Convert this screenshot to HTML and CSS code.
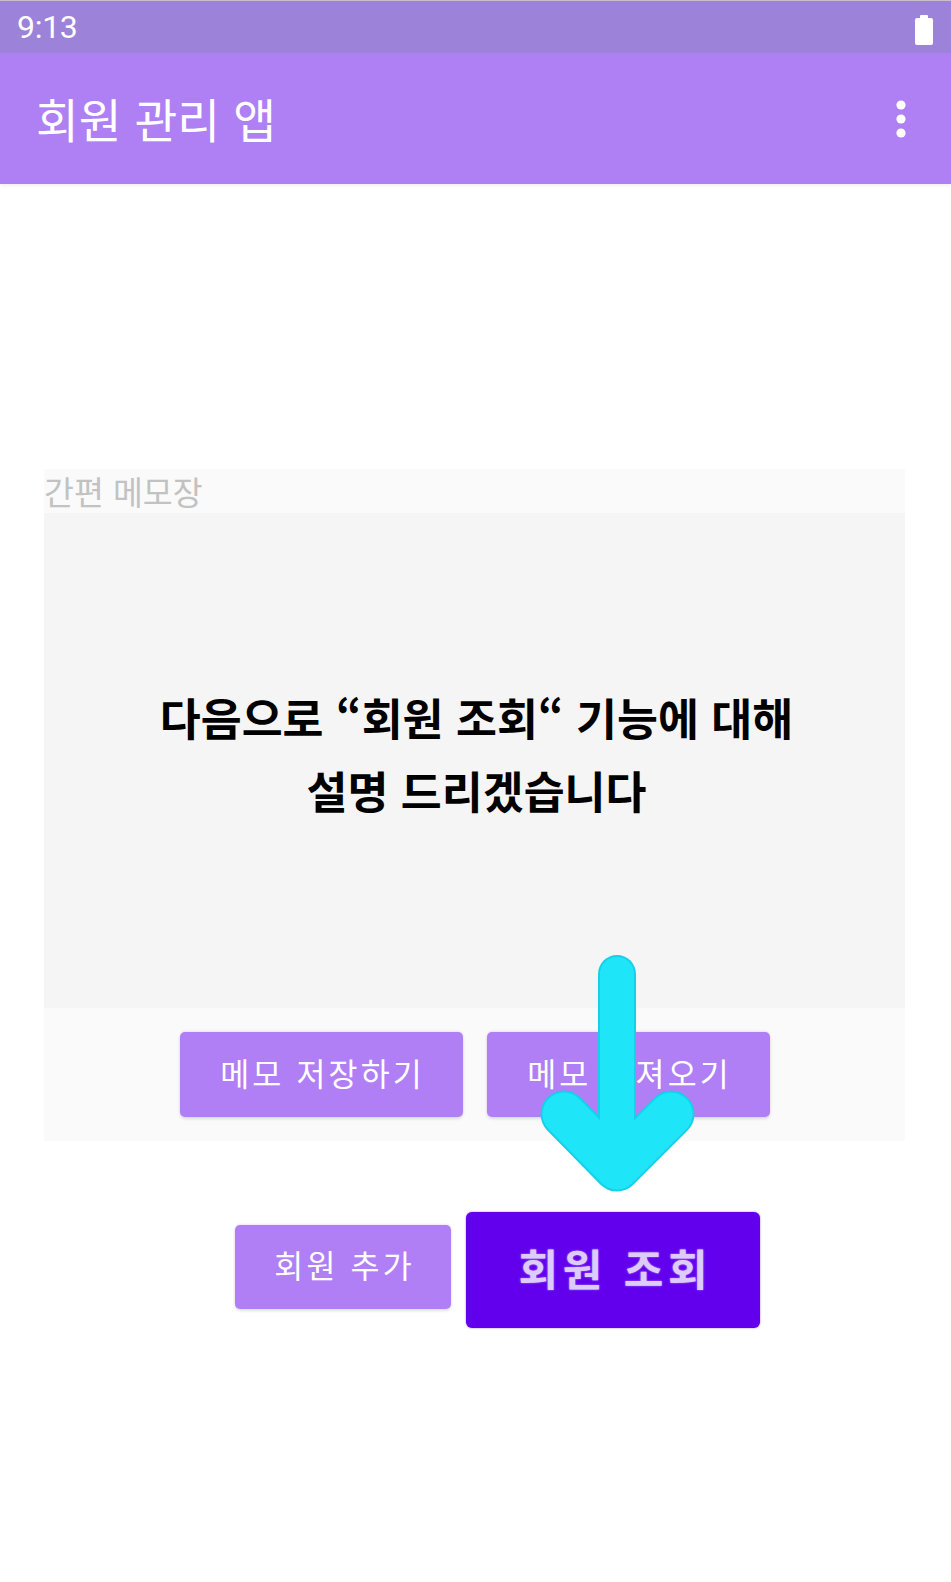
FILE: index.html
```html
<!DOCTYPE html>
<html lang="ko">
<head>
<meta charset="utf-8">
<title>회원 관리 앱</title>
<link rel="stylesheet" href="styles.css">
</head>
<body>
<div class="screen">
  <div class="status">
    <span class="time">9:13</span>
    <svg class="battery" width="18" height="31" viewBox="0 0 18 31">
      <rect x="5" y="0" width="8" height="4" rx="1" fill="#fff"/>
      <rect x="0" y="3" width="18" height="27" rx="2" fill="#fff"/>
    </svg>
  </div>
  <div class="appbar">
    <span class="title">회원 관리 앱</span>
    <svg class="menu" width="12" height="40" viewBox="0 0 12 40">
      <circle cx="6" cy="6" r="4.6" fill="#fff"/>
      <circle cx="6" cy="20" r="4.6" fill="#fff"/>
      <circle cx="6" cy="34" r="4.6" fill="#fff"/>
    </svg>
  </div>
  <main class="content">
    <section class="memo">
      <div class="memo-label">간편 메모장</div>
      <div class="memo-body">
        <p class="guide">다음으로 “회원 조회“ 기능에 대해<br>설명 드리겠습니다</p>
      </div>
      <div class="memo-actions">
        <button class="btn btn-w1">메모 저장하기</button>
        <button class="btn btn-w1">메모 가져오기</button>
      </div>
    </section>
    <div class="member-row">
      <button class="btn btn-add">회원 추가</button>
      <button class="btn btn-query">회원 조회</button>
    </div>
    <svg class="arrow" width="200" height="260" viewBox="0 0 200 260">
      <g fill="none" stroke-linecap="round" stroke-linejoin="round">
        <path d="M97 26 L97 218" stroke="#17cfe8" stroke-width="38"/>
        <path d="M44 166 L97 220 L151 166" stroke="#17cfe8" stroke-width="47"/>
        <path d="M97 26 L97 218" stroke="#1ee6f8" stroke-width="34"/>
        <path d="M44 166 L97 220 L151 166" stroke="#1ee6f8" stroke-width="43"/>
      </g>
    </svg>
  </main>
</div>
</body>
</html>
```

FILE: styles.css
```css
* { box-sizing: border-box; }
html, body { margin: 0; padding: 0; background: #fff; }
body {
  width: 951px;
  font-family: "Noto Sans CJK KR", "Noto Sans", sans-serif;
}
.screen { width: 951px; min-height: 1582px; position: relative; background: #fff; }

.status {
  height: 53px;
  background: #9c82d9;
  border-top: 1px solid #c4c0cc;
  display: flex;
  align-items: center;
  justify-content: space-between;
  padding: 0 18px 0 17px;
}
.time {
  font-family: Roboto, "Liberation Sans", sans-serif;
  color: #fff;
  font-size: 32px;
  line-height: 1;
  letter-spacing: -0.3px;
}
.battery { margin-top: 6px; }

.appbar {
  height: 131px;
  background: #af7ff4;
  display: flex;
  align-items: center;
  justify-content: space-between;
  padding: 0 44px 0 36px;
  box-shadow: 0 2px 3px rgba(0,0,0,0.06);
  position: relative;
  z-index: 1;
}
.title {
  color: #fff;
  font-size: 46.5px;
  font-weight: 400;
  line-height: 1;
}

.content { position: relative; padding-top: 285px; }

.memo { margin-left: 44px; width: 861px; }
.memo-label {
  height: 44px;
  background: #fafafa;
  color: #c2c2c2;
  font-size: 32.5px;
  line-height: 44px;
}
.memo-body {
  height: 495px;
  background: #f5f5f5;
  display: flex;
  align-items: center;
  justify-content: center;
}
.guide {
  margin: 0 0 15px;
  text-align: center;
  font-size: 44.5px;
  font-weight: 700;
  line-height: 73px;
  color: #000;
  padding-left: 4px;
}
.memo-actions {
  height: 133px;
  background: #fafafa;
  display: flex;
  justify-content: center;
  gap: 24px;
  padding-top: 24px;
}

.btn {
  border: 0;
  border-radius: 5px;
  background: #b07ff5;
  color: #fff;
  font-family: "Noto Sans CJK KR", "Noto Sans", sans-serif;
  font-size: 31.5px;
  letter-spacing: 0.1em;
  padding: 0 0 6px 0.1em;
  box-shadow: 0 2px 3px rgba(0,0,0,0.12), 0 -1px 2px rgba(150,100,230,0.15);
}
.btn-w1 { width: 283px; height: 85px; }

.member-row {
  display: flex;
  align-items: flex-start;
  gap: 15px;
  padding-left: 235px;
  padding-top: 71px;
}
.btn-add { width: 216px; height: 84px; margin-top: 13px; }
.btn-query {
  width: 294px;
  height: 116px;
  background: #6200ee;
  color: #dccbfb;
  font-size: 43px;
  font-weight: 700;
  letter-spacing: 0.11em;
  padding: 0 0 6px 0.11em;
  border-radius: 6px;
  text-shadow: 0 0 2px rgba(220,200,255,0.7);
  box-shadow: 0 0 2px rgba(98,0,238,0.6);
}

.arrow {
  position: absolute;
  left: 520px;
  top: 764px;
}
```
